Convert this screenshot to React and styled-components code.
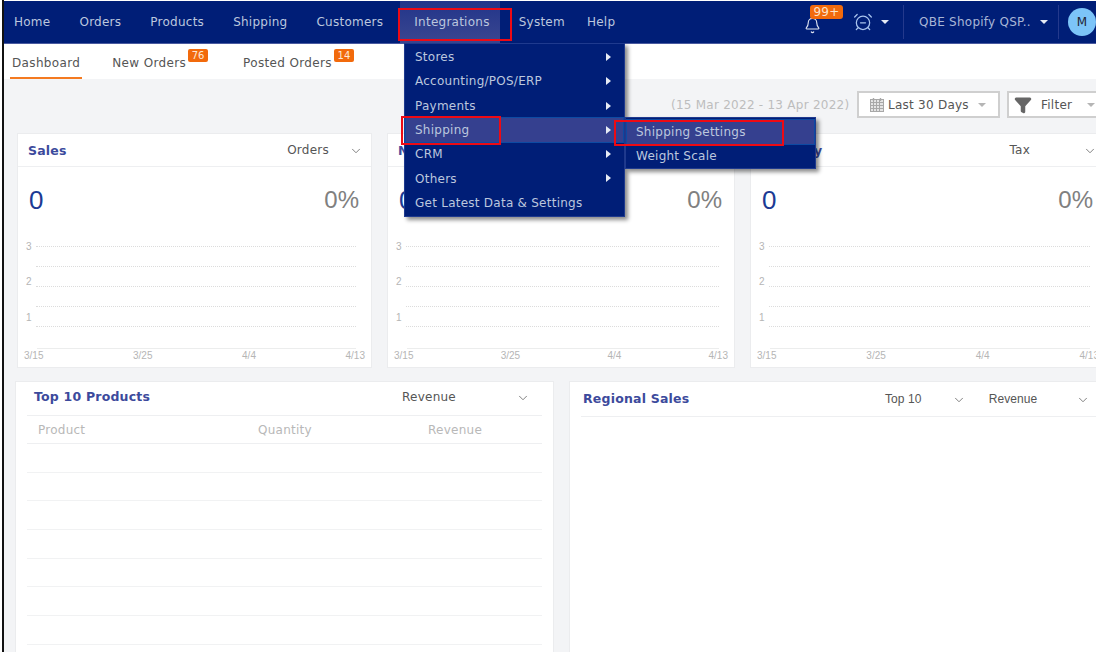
import styled, { createGlobalStyle } from 'styled-components'
import { AlarmClockMinus, Bell, ChevronDown, Funnel } from 'lucide-react'

const navItems = ['Home', 'Orders', 'Products', 'Shipping', 'Customers', 'Integrations', 'System', 'Help']
const menuItems = ['Stores', 'Accounting/POS/ERP', 'Payments', 'Shipping', 'CRM', 'Others', 'Get Latest Data & Settings']
const noArrow = 'Get Latest Data & Settings'
const charts = [
	{ title: 'Sales', pick: 'Orders', gap: '20px' },
	{ title: 'Net Sales', pick: 'Orders', gap: '20px' },
	{ title: 'Tax Only', pick: 'Tax', gap: '53px' },
]
const axisLabels = ['3/15', '3/25', '4/4', '4/13']
const gridRows = [
	{ label: '3', shift: 0 },
	{ label: '', shift: 0 },
	{ label: '2', shift: -5 },
	{ label: '', shift: 0 },
	{ label: '1', shift: -9 },
]

const CalendarIcon = () => (
	<svg width="16" height="16" viewBox="0 0 16 16" fill="none" stroke="#a8a8a8" strokeWidth="1">
		<rect x="1.5" y="2.5" width="13" height="12" fill="#e4e4e4" />
		<path d="M1.5 5.5h13M1.5 8.5h13M1.5 11.5h13M4.5 2.5v12M7.5 2.5v12M10.5 2.5v12" />
		<path d="M4.5 1v3M11.5 1v3" strokeWidth="1.4" />
	</svg>
)

const ChartCard = ({ title, pick, gap }) => (
	<Card>
		<CardHead>
			<CardTitle>{title}</CardTitle>
			<Picker $gap={gap}>
				<span>{pick}</span>
				<ChevronDown size={14} strokeWidth={1.4} />
			</Picker>
		</CardHead>
		<Figures>
			<BigNumber>0</BigNumber>
			<Percent>0%</Percent>
		</Figures>
		<Plot>
			{gridRows.map((row, index) => (
				<GridRow key={index}>
					<TickLabel $shift={row.shift}>{row.label}</TickLabel>
					<DottedLine />
				</GridRow>
			))}
		</Plot>
		<AxisRule />
		<AxisLabels>
			{axisLabels.map(label => <span key={label}>{label}</span>)}
		</AxisLabels>
	</Card>
)

const App = () => (
	<Page>
		<GlobalStyle />
		<TopBar>
			<NavList>
				{navItems.map(item => (
					<NavItem key={item} $active={item === 'Integrations'}>{item}</NavItem>
				))}
			</NavList>
			<NavTools>
				<BellBox>
					<Bell size={17} strokeWidth={1.6} />
					<BellBadge>99+</BellBadge>
				</BellBox>
				<AlarmClockMinus size={20} strokeWidth={1.5} color="#a9c4ee" />
				<Caret $left="8px" />
				<Divider $left="14px" $right="15px" />
				<StoreName>QBE Shopify QSP..</StoreName>
				<Caret $left="5px" />
				<Divider $left="10px" $right="9px" />
				<Avatar>M</Avatar>
			</NavTools>
		</TopBar>

		<Tabs>
			<Tab $active>Dashboard</Tab>
			<Tab>New Orders<TabBadge>76</TabBadge></Tab>
			<Tab>Posted Orders<TabBadge>14</TabBadge></Tab>
		</Tabs>

		<Content>
			<Toolbar>
				<DateRange>(15 Mar 2022 - 13 Apr 2022)</DateRange>
				<ToolButton $width="143px" $pad="10px">
					<CalendarIcon />
					<span>Last 30 Days</span>
					<GreyCaret $left="6px" />
				</ToolButton>
				<ToolButton $width="100px" $pad="5px">
					<Funnel size={18} fill="#666" color="#666" />
					<FilterLabel>Filter</FilterLabel>
					<GreyCaret $left="12px" />
				</ToolButton>
			</Toolbar>

			<ChartGrid>
				{charts.map(chart => <ChartCard key={chart.title} {...chart} />)}
			</ChartGrid>

			<BottomGrid>
				<TableCard>
					<TableHead>
						<CardTitle>Top 10 Products</CardTitle>
						<Picker $gap="60px">
							<span>Revenue</span>
							<ChevronDown size={14} strokeWidth={1.4} />
						</Picker>
					</TableHead>
					<Columns>
						<span>Product</span>
						<span>Quantity</span>
						<span>Revenue</span>
					</Columns>
					{Array.from({ length: 7 }).map((_, index) => <EmptyRow key={index} />)}
				</TableCard>
				<TableCard>
					<RegionHead>
						<RegionTitle>Regional Sales</RegionTitle>
						<RegionPickers>
							<Picker $gap="30px" $narrow>
								<span>Top 10</span>
								<ChevronDown size={14} strokeWidth={1.4} />
							</Picker>
							<Picker $gap="39px" $narrow>
								<span>Revenue</span>
								<ChevronDown size={14} strokeWidth={1.4} />
							</Picker>
						</RegionPickers>
					</RegionHead>
				</TableCard>
			</BottomGrid>
		</Content>

		<Menu>
			{menuItems.map(item => (
				<MenuItem key={item} $active={item === 'Shipping'}>
					{item}
					{item !== noArrow && <Arrow />}
				</MenuItem>
			))}
		</Menu>
		<SubMenu>
			<MenuItem $active>Shipping Settings</MenuItem>
			<MenuItem>Weight Scale</MenuItem>
		</SubMenu>

		<RedBox $x="398px" $y="8px" $w="114px" $h="33px" />
		<RedBox $x="401px" $y="116px" $w="100px" $h="29px" />
		<RedBox $x="614px" $y="120px" $w="170px" $h="26px" />
	</Page>
)

export default App


const GlobalStyle = createGlobalStyle`
	html, body {
		margin: 0;
		background: #fff;
		overflow: hidden;
	}

	* {
		box-sizing: border-box;
	}
`

const Page = styled.div`
	position: relative;
	width: 1096px;
	height: 652px;
	margin-left: 2px;
	padding-top: 1px;
	border-left: 2px solid #111;
	overflow: hidden;

	font-family: "DejaVu Sans", Verdana, sans-serif;
	font-size: 12px;
	letter-spacing: 0.25px;
	color: #555;
`

const TopBar = styled.header`
	height: 43px;
	padding-right: 2px;
	display: flex;
	justify-content: space-between;
	align-items: stretch;
	background: #001e77;
	border-bottom: 1px solid #4a5aa0;
`

const NavList = styled.nav`
	display: flex;
	margin-left: -4.5px;
`

const NavItem = styled.div`
	display: flex;
	align-items: center;
	padding: ${p => (p.$active ? '0 10px 0 14px' : '0 14.5px')};
	margin: ${p => (p.$active ? '0 4.5px 0 2.5px' : '0')};
	background: ${p => (p.$active ? 'linear-gradient(#22358a, #3a4690)' : 'transparent')};
	color: #bcc7de;

	&:last-child {
		margin-left: -7px;
	}
`

const NavTools = styled.div`
	display: flex;
	align-items: center;
	color: #bcc7de;
`

const BellBox = styled.div`
	position: relative;
	display: flex;
	margin-right: 32px;
	padding-top: 6px;
	color: #dfe5f2;
`

const BellBadge = styled.span`
	position: absolute;
	top: -6px;
	left: 6px;
	width: 33px;
	border-radius: 3px;
	background: #f26a0c;
	color: #fbe2c8;
	line-height: 14px;
	text-align: center;
`

const Caret = styled.span`
	width: 0;
	height: 0;
	margin-left: ${p => p.$left};
	border-left: 4px solid transparent;
	border-right: 4px solid transparent;
	border-top: 4px solid #e6ebf5;
`

const Divider = styled.span`
	width: 1px;
	height: 34px;
	margin: 0 ${p => p.$right} 0 ${p => p.$left};
	background: #24398c;
`

const StoreName = styled.span`
	width: 116px;
	color: #a9b6d6;
	white-space: nowrap;
`

const Avatar = styled.div`
	width: 28px;
	height: 28px;
	display: flex;
	align-items: center;
	justify-content: center;
	border-radius: 50%;
	background: #7cc4f8;
	color: #223;
`

const Tabs = styled.div`
	height: 35px;
	display: flex;
	gap: 28px;
	padding-left: 6px;
	background: #fff;
`

const Tab = styled.div`
	position: relative;
	display: flex;
	align-items: center;
	padding: 4px ${p => (p.$active ? '2px' : '22px')} 0 2px;
	margin-right: ${p => (p.$active ? '0' : '5px')};
	border-bottom: 2px solid ${p => (p.$active ? '#f47a20' : 'transparent')};
	color: #555;
	letter-spacing: 0.35px;
`

const TabBadge = styled.span`
	position: absolute;
	right: 0;
	top: 5px;
	width: 20px;
	height: 13px;
	border-radius: 2px;
	background: #f26a0c;
	color: #fde9d6;
	font-size: 10px;
	line-height: 13px;
	letter-spacing: 0;
	text-align: center;
`

const Content = styled.main`
	height: 600px;
	padding: 12px 0 0 13px;
	background: #f3f4f6;
`

const Toolbar = styled.div`
	width: 1200px;
	height: 27px;
	margin-bottom: 15px;
	padding-left: 654px;
	display: flex;
	align-items: center;
	gap: 5px;
`

const DateRange = styled.span`
	flex: none;
	width: 181px;
	color: #bdbdbd;
	white-space: nowrap;
`

const ToolButton = styled.div`
	flex: none;
	width: ${p => p.$width};
	height: 27px;
	margin-right: 2px;
	padding-left: ${p => p.$pad};
	display: flex;
	align-items: center;
	gap: 3px;
	background: #fff;
	border: 2px solid #cfcfcf;
	color: #555;
	white-space: nowrap;
`

const FilterLabel = styled.span`
	margin-left: 6px;
`

const GreyCaret = styled.span`
	width: 0;
	height: 0;
	margin-left: ${p => p.$left};
	border-left: 4px solid transparent;
	border-right: 4px solid transparent;
	border-top: 4px solid #b5b5b5;
`

const ChartGrid = styled.div`
	display: grid;
	grid-template-columns: 355px 348px 356px;
	gap: 15px;
	width: 1100px;
`

const Card = styled.section`
	height: 235px;
	padding: 0 10px 0 5px;
	background: #fff;
	border: 1px solid #ebecee;
`

const CardHead = styled.div`
	height: 33px;
	margin: 0 -10px 0 -5px;
	padding: 0 8px 0 10px;
	display: flex;
	justify-content: space-between;
	align-items: center;
	border-bottom: 1px solid #eeeff1;
`

const CardTitle = styled.h3`
	margin: 0;
	color: #3c4a9c;
	font-size: 12.5px;
	font-weight: bold;
	letter-spacing: 0.2px;
`

const RegionTitle = styled(CardTitle)`
	width: 302px;
`

const Picker = styled.div`
	display: flex;
	align-items: center;
	gap: ${p => p.$gap};
	color: #555;
	font-family: ${p => (p.$narrow ? '"Liberation Sans", Arial, sans-serif' : 'inherit')};
	letter-spacing: ${p => (p.$narrow ? '0.1px' : '0.25px')};

	svg {
		margin-top: 2px;
		color: #666;
	}
`

const Figures = styled.div`
	height: 69px;
	padding: 18px 2px 0 6px;
	display: flex;
	justify-content: space-between;
	align-items: flex-start;

	font-family: "Liberation Sans", Arial, sans-serif;
	letter-spacing: 0;
`

const BigNumber = styled.span`
	color: #1c3a94;
	font-size: 26px;
	line-height: 30px;
`

const Percent = styled.span`
	color: #808080;
	font-size: 24px;
	line-height: 30px;
`

const Plot = styled.div`
	display: flex;
	flex-direction: column;
`

const GridRow = styled.div`
	height: 20.2px;
	display: flex;
	align-items: center;
	gap: 3px;
`

const TickLabel = styled.span`
	width: 7px;
	margin-left: 3px;
	transform: translateY(${p => p.$shift}px);
	color: #b5b5b5;
	font-family: "Liberation Sans", Arial, sans-serif;
	font-size: 10px;
	letter-spacing: 0;
`

const DottedLine = styled.div`
	flex: 1;
	margin-right: 5px;
	border-top: 1px dotted #dcdcdc;
`

const AxisRule = styled.div`
	height: 1px;
	margin: 11px 5px 0 14px;
	background: #eceded;
`

const AxisLabels = styled.div`
	margin: 1px -4px 0 1px;
	display: flex;
	justify-content: space-between;
	color: #b5b5b5;
	font-family: "Liberation Sans", Arial, sans-serif;
	font-size: 10px;
	letter-spacing: 0;
`

const BottomGrid = styled.div`
	display: grid;
	grid-template-columns: 539px 560px;
	gap: 15px;
	width: 1120px;
	margin: 13px 0 0 -2px;
`

const TableCard = styled.section`
	height: 320px;
	padding: 0 11px;
	background: #fff;
	border: 1px solid #ebecee;
`

const TableHead = styled.div`
	height: 34px;
	padding: 0 12px 4px 7px;
	display: flex;
	justify-content: space-between;
	align-items: center;
	border-bottom: 1px solid #eeeff1;
`

const RegionHead = styled(TableHead)`
	height: 35px;
	padding: 0 0 1px 2px;
	justify-content: flex-start;
`

const RegionPickers = styled.div`
	display: flex;
	gap: 23px;
`

const Columns = styled.div`
	height: 28px;
	padding-left: 11px;
	display: grid;
	grid-template-columns: 220px 170px 1fr;
	align-items: center;
	border-bottom: 1px solid #eeeff1;
	color: #b8b8b8;
`

const EmptyRow = styled.div`
	height: 28.7px;
	border-bottom: 1px solid #f1f2f3;
`

const Menu = styled.div`
	position: absolute;
	top: 43px;
	left: 400px;
	width: 221px;
	height: 174px;
	padding: 1px;
	background: #001e77;
	border: 1px solid #1f3a8e;
	box-shadow: 3px 3px 4px rgba(0, 0, 0, 0.45);
`

const SubMenu = styled(Menu)`
	top: 117px;
	left: 621px;
	width: 191px;
	height: 52px;
	padding: 2px 1px;
`

const MenuItem = styled.div`
	position: relative;
	height: 24.3px;
	padding-left: 9px;
	display: flex;
	align-items: center;
	background: ${p => (p.$active ? '#35408f' : 'transparent')};
	outline: ${p => (p.$active ? '1px solid #0d4aa3' : 'none')};
	color: #bcc7de;
`

const Arrow = styled.span`
	position: absolute;
	right: 12px;
	top: 8px;
	width: 0;
	height: 0;
	border-top: 4px solid transparent;
	border-bottom: 4px solid transparent;
	border-left: 5px solid #e6ebf5;
`

const RedBox = styled.div`
	position: absolute;
	left: calc(${p => p.$x} - 4px);
	top: ${p => p.$y};
	width: ${p => p.$w};
	height: ${p => p.$h};
	border: 2px solid #ee0a14;
`
